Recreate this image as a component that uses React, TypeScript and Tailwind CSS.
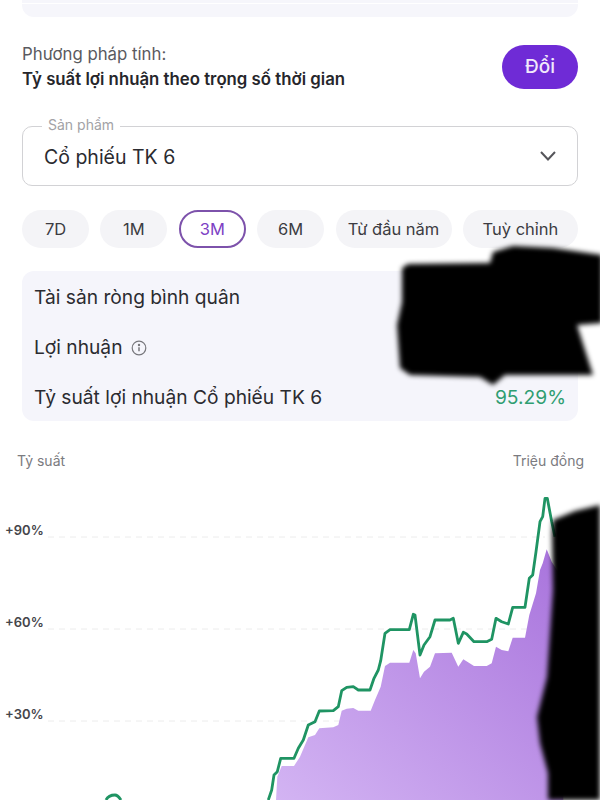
import React from 'react';

const sans = 'font-["Inter","Liberation_Sans",sans-serif]';

const periods = [
  { label: '7D', w: 'w-[67px]' },
  { label: '1M', w: 'w-[67px]' },
  { label: '3M', w: 'w-[67px]', active: true },
  { label: '6M', w: 'w-[67px]' },
  { label: 'Từ đầu năm', w: 'w-[116px]' },
  { label: 'Tuỳ chỉnh', w: 'w-[115px]' },
];

// traced from the reference, x/y are page px * 3 from (250, 480)
const linePts: [number, number][] = [
  [55, 960], [65, 930], [72, 885], [82, 875], [92, 835], [132, 835], [145, 805], [160, 780], [175, 735],
  [195, 725], [208, 693], [250, 692], [265, 680], [275, 632], [290, 622], [310, 620], [325, 630], [360, 630],
  [372, 595], [385, 570], [392, 542], [405, 460], [420, 449], [478, 449], [490, 403], [495, 405], [510, 525],
  [522, 495], [540, 470], [555, 420], [600, 420], [610, 415], [625, 490], [640, 457], [650, 462], [672, 485],
  [710, 485], [725, 478], [738, 415], [755, 425], [775, 432], [788, 382], [825, 382], [838, 295], [848, 285],
  [858, 215], [870, 125], [878, 110], [885, 55], [892, 55], [905, 125], [915, 170],
];

const areaPts: [number, number][] = [
  [78, 960], [82, 890], [95, 858], [132, 858], [150, 830], [175, 772], [195, 765], [208, 745], [250, 742],
  [265, 735], [275, 692], [290, 686], [310, 684], [325, 692], [362, 692], [375, 660], [392, 620], [405, 558],
  [420, 548], [478, 548], [490, 510], [497, 520], [510, 595], [522, 575], [540, 560], [555, 520], [605, 518],
  [625, 560], [640, 538], [672, 558], [710, 558], [725, 550], [738, 500], [755, 510], [775, 514], [788, 473],
  [825, 473], [838, 405], [858, 340], [870, 270], [878, 250], [890, 208], [905, 245], [940, 300], [940, 960],
];

const toPage = (pts: [number, number][]) =>
  pts.map(([x, y]) => `${(250 + x / 3).toFixed(1)},${(y / 3).toFixed(1)}`).join(' ');

const Chart = () => (
  <svg className="block" width="600" height="320" viewBox="0 0 600 320">
    <defs>
      <linearGradient id="fillArea" x1="0" y1="1" x2="1" y2="0">
        <stop offset="0" stopColor="#d3b4f3" />
        <stop offset="1" stopColor="#a873dc" />
      </linearGradient>
      <filter id="soft" x="-20%" y="-20%" width="140%" height="140%">
        <feGaussianBlur stdDeviation="2.5" />
      </filter>
    </defs>
    {[57, 149, 241].map((y) => (
      <line key={y} x1="48" x2="545" y1={y} y2={y} stroke="#ececec" strokeWidth="1" strokeDasharray="6 5" />
    ))}
    <polygon points={toPage(areaPts)} fill="url(#fillArea)" />
    <polyline points={toPage(linePts)} fill="none" stroke="#1f9463" strokeWidth="2.8" strokeLinejoin="round" />
    {/* left part of the line, just entering the bottom of the frame */}
    <path d="M106 320 C108 316 111 315 115 315 C118 315 119 317 121 320" fill="none" stroke="#1f9463" strokeWidth="2.8" />
    {/* scribbled-out area on the right */}
    <path
      d="M553 40 L575 31 L600 25 L600 320 L548 320 L548 293 L540 263 L537 237 L547 197 L553 110 L552 53 Z"
      fill="#000"
      filter="url(#soft)"
    />
  </svg>
);

export default function App() {
  return (
    <div className={`relative h-[800px] w-[600px] overflow-hidden bg-white text-[#2b2b30] ${sans}`}>
      <div className="px-[22px]">
        <div className="h-[17px] rounded-b-[12px] bg-[#f6f6fb] pt-[3px]">
          <div className="h-px bg-white" />
        </div>

        <div className="mt-[28px] flex h-[44px] items-center justify-between">
          <div>
            <div className="text-[16.8px] leading-[24px] text-[#5a5a60]">Phương pháp tính:</div>
            <div className="text-[16.8px] font-semibold leading-[26px] text-[#26262b]">
              Tỷ suất lợi nhuận theo trọng số thời gian
            </div>
          </div>
          <button className="h-[44px] w-[76px] rounded-full bg-[#6f2bd6] text-[19px] font-medium text-[#f1e9fb]">
            Đổi
          </button>
        </div>

        <div className="relative mt-[37px] flex h-[60px] items-center justify-between rounded-[10px] border-[1.7px] border-[#d2d2d5] pl-[21px] pr-[20px] pt-[3px]">
          <span className="absolute left-[19px] top-[-10px] bg-white px-[6px] text-[14px] leading-[16px] text-[#a2a2a6]">
            Sản phẩm
          </span>
          <span className="text-[19.5px] text-[#2b2b30]">Cổ phiếu TK 6</span>
          <svg className="mb-[3px]" width="18" height="12" viewBox="0 0 18 12" fill="none" stroke="#55555a" strokeWidth="2">
            <path d="M2 2l7 7.5L16 2" />
          </svg>
        </div>

        <div className="mt-[24px] flex justify-between">
          {periods.map((p) => (
            <div
              key={p.label}
              className={
                p.active
                  ? `flex h-[38px] items-center justify-center rounded-full border-2 border-[#7d52ab] bg-white pt-px text-[16.5px] text-[#7d3fc4] ${p.w}`
                  : `flex h-[38px] items-center justify-center rounded-full bg-[#f4f4f7] pt-px text-[16.5px] text-[#3c3c42] ${p.w}`
              }
            >
              {p.label}
            </div>
          ))}
        </div>

        <div className="mt-[23px] flex h-[150px] flex-col justify-between rounded-[12px] bg-[#f5f5fb] px-[12px] text-[19.2px]">
          <div className="flex h-[50px] items-center pt-[3px]">Tài sản ròng bình quân</div>
          <div className="flex h-[50px] items-center gap-[9px] pt-[3px]">
            Lợi nhuận
            <svg width="16" height="16" viewBox="0 0 16 16" fill="none" stroke="#77777c" strokeWidth="1.2">
              <circle cx="8" cy="8" r="6.8" />
              <path d="M8 7.2v4" strokeWidth="1.5" />
              <circle cx="8" cy="5" r="0.6" fill="#77777c" />
            </svg>
          </div>
          <div className="flex h-[50px] items-center justify-between pt-[3px]">
            <span>Tỷ suất lợi nhuận Cổ phiếu TK 6</span>
            <span className="text-[#2f9e72]">95.29%</span>
          </div>
        </div>
      </div>

      <div className="mt-[32px] flex justify-between pl-[17px] pr-[16px] text-[14px] leading-[16px] text-[#7b7b80]">
        <span>Tỷ suất</span>
        <span>Triệu đồng</span>
      </div>

      <div className="relative mt-[11px]">
        <Chart />
        {/* y axis labels overlay the plot */}
        <div className="absolute left-[5px] top-[42px] text-[13px] font-semibold leading-[16px] text-[#45454a]">+90%</div>
        <div className="absolute left-[5px] top-[134px] text-[13px] font-semibold leading-[16px] text-[#45454a]">+60%</div>
        <div className="absolute left-[5px] top-[226px] text-[13px] font-semibold leading-[16px] text-[#45454a]">+30%</div>
      </div>

      {/* scribble over the figures */}
      <svg className="absolute left-[380px] top-[235px]" width="220" height="160" viewBox="0 0 220 160">
        <defs>
          <filter id="soft2" x="-20%" y="-20%" width="140%" height="140%">
            <feGaussianBlur stdDeviation="2.5" />
          </filter>
        </defs>
        <path
          d="M22 33 L28 29 L110 28 L113 17 L133 11 L173 13 L222 20 L222 88 L197 90 L213 140 L125 140 L113 150 L100 142 L30 140 L20 133 L17 90 L22 67 Z"
          fill="#000"
          filter="url(#soft2)"
        />
      </svg>
    </div>
  );
}
